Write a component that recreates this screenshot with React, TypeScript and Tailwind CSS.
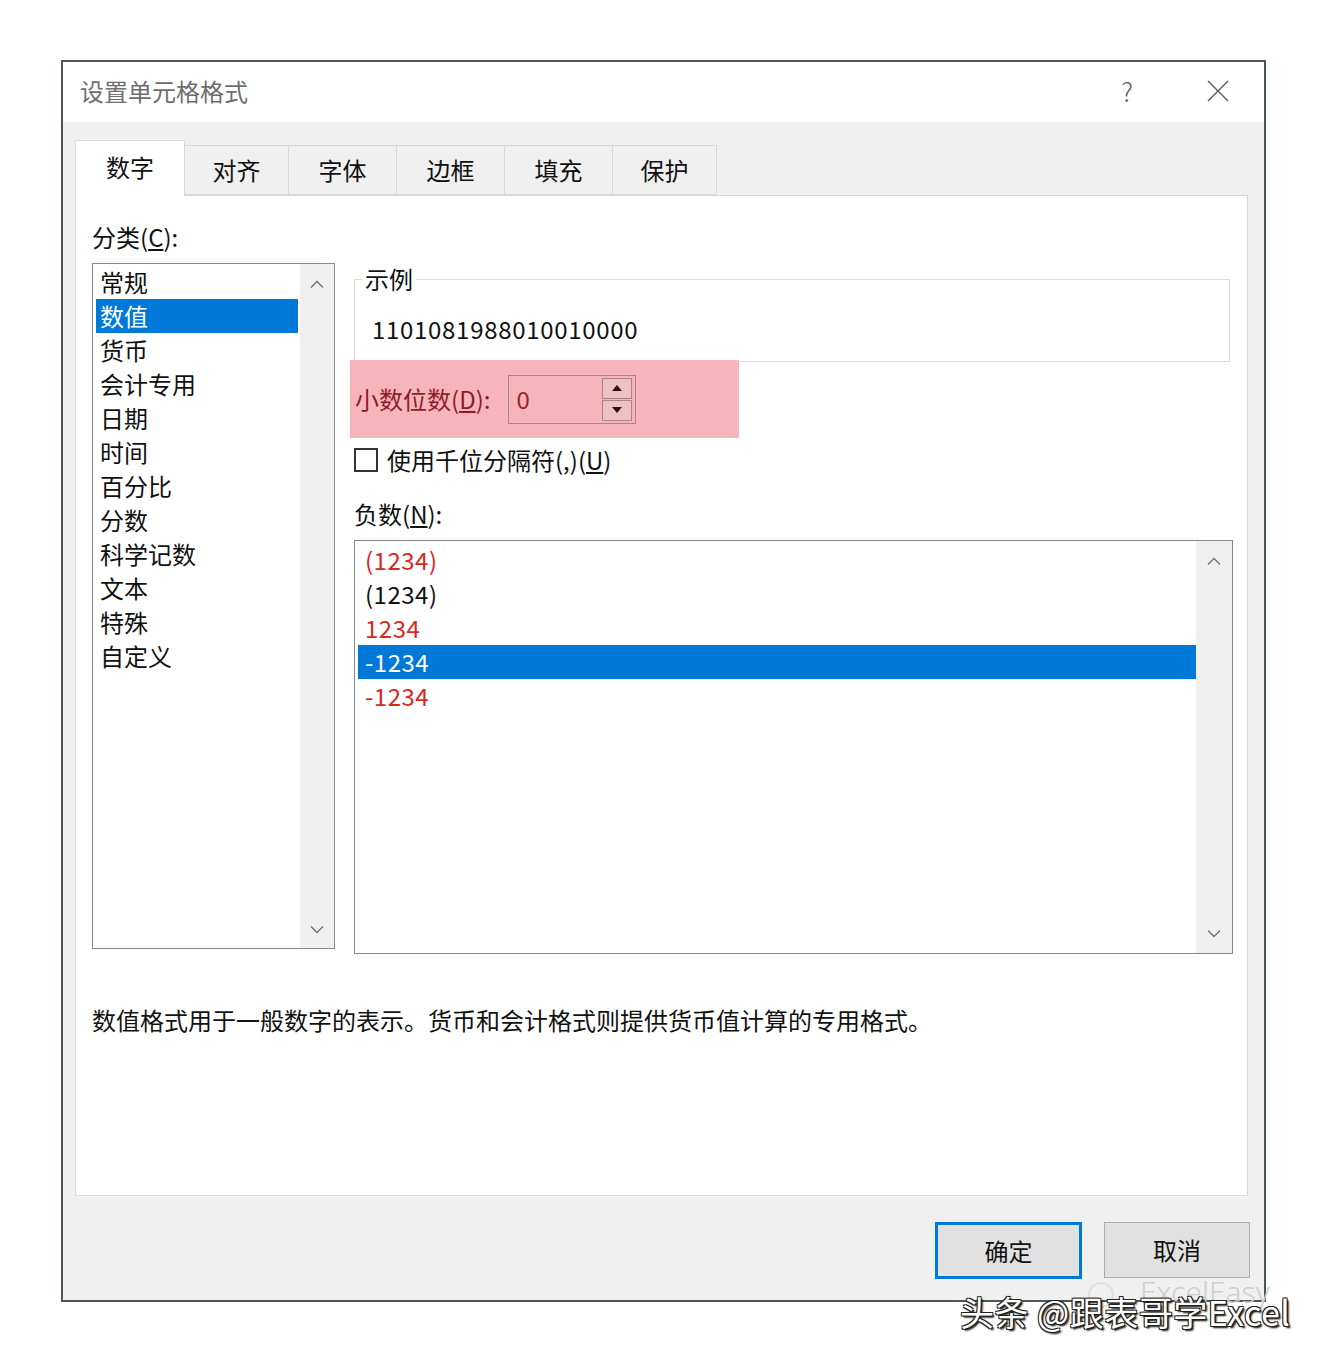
import React from "react";

const categories = ["常规", "数值", "货币", "会计专用", "日期", "时间", "百分比", "分数", "科学记数", "文本", "特殊", "自定义"];

const negatives = [
  { text: "(1234)", red: true },
  { text: "(1234)", red: false },
  { text: "1234", red: true },
  { text: "-1234", red: false, selected: true },
  { text: "-1234", red: true },
];

const tabs = ["数字", "对齐", "字体", "边框", "填充", "保护"];
const tabWidths = ["w-[110px]", "w-[104px]", "w-[108px]", "w-[108px]", "w-[108px]", "w-[104px]"];

function Chevron({ up }: { up?: boolean }) {
  return (
    <svg width="14" height="8" viewBox="0 0 14 8" fill="none" stroke="#707070" strokeWidth="1.3">
      <path d={up ? "M1 7.5L7 1.5L13 7.5" : "M1 0.5L7 6.5L13 0.5"} />
    </svg>
  );
}

function SpinArrow({ up }: { up?: boolean }) {
  return (
    <svg width="10" height="6" viewBox="0 0 10 6" fill="#2a1214">
      <path d={up ? "M0 6L5 0L10 6Z" : "M0 0L5 6L10 0Z"} />
    </svg>
  );
}

export default function App() {
  return (
    <div className="relative w-[1326px] h-[1362px] bg-white font-['Noto_Sans_CJK_SC','Noto_Sans',sans-serif] text-[24px] text-[#111]">
      <div className="absolute left-0 top-0 w-full pt-[60px] pl-[61px]">
        {/* dialog */}
        <div className="w-[1205px] h-[1242px] border-2 border-[#4b5757] flex flex-col bg-[#f0f0f0]">
          {/* title bar */}
          <div className="h-[60px] bg-white flex items-center pl-[17px] shrink-0">
            <span className="text-[#6e6e6e] leading-[30px] -mt-[3px]">设置单元格格式</span>
            <div className="flex-1" />
            <span className="text-[#5a5a5a] text-[26px] font-light leading-[30px] w-[20px] text-center mr-[70px] -mt-[3px]">?</span>
            <svg width="22" height="22" viewBox="0 0 22 22" stroke="#5a5a5a" strokeWidth="1.4" className="mr-[35px] -mt-[3px]">
              <path d="M1 1L21 21M21 1L1 21" />
            </svg>
          </div>

          {/* body */}
          <div className="flex-1 flex flex-col pl-[12px] pr-[16px] pt-[18px]">
            {/* tabs */}
            <div className="flex items-end h-[55px] relative z-10">
              {tabs.map((t, i) =>
                i === 0 ? (
                  <div
                    key={t}
                    className={`${tabWidths[i]} h-[56px] -mb-px bg-white border border-b-0 border-[#d9d9d9] rounded-t-[2px] flex items-center justify-center pb-[3px]`}
                  >
                    {t}
                  </div>
                ) : (
                  <div
                    key={t}
                    className={`${tabWidths[i]} h-[50px] bg-[#f0f0f0] border border-l-0 border-[#d9d9d9] flex items-center justify-center`}
                  >
                    {t}
                  </div>
                )
              )}
            </div>

            {/* panel */}
            <div className="h-[1001px] bg-white border border-[#d9d9d9] flex flex-col pl-[16px] pr-[13px] pt-[26px]">
              <div className="flex">
                {/* left column */}
                <div className="w-[243px] flex flex-col">
                  <div className="leading-[30px] h-[30px] mb-[11px]">
                    分类(<span className="underline underline-offset-2">C</span>):
                  </div>
                  <div className="h-[686px] border border-[#828790] bg-white flex">
                    <div className="flex-1 pt-[1px] pl-[3px] pr-[2px]">
                      {categories.map((c) => (
                        <div
                          key={c}
                          className={`h-[34px] leading-[34px] pl-[4px] ${c === "数值" ? "bg-[#0078d7] text-white" : ""}`}
                        >
                          {c}
                        </div>
                      ))}
                    </div>
                    <div className="w-[34px] bg-[#f0f0f0] flex flex-col items-center justify-between pt-[16px] pb-[14px]">
                      <Chevron up />
                      <Chevron />
                    </div>
                  </div>
                </div>

                {/* right column */}
                <div className="ml-[19px] w-[879px] flex flex-col pt-[42px]">
                  <fieldset className="w-[876px] border border-[#dcdcdc] pl-[17px] pr-0 pt-[20px] pb-[17px] m-0 min-w-0">
                    <legend className="-ml-[10px] px-[3px] leading-[30px]">示例</legend>
                    <div className="leading-[30px] tracking-[0.7px]">1101081988010010000</div>
                  </fieldset>

                  <div className="-ml-[4px] -mt-[2px] w-[389px] h-[78px] bg-[#f6b5ba] flex items-center pl-[5px] relative z-10">
                    <span className="text-[#8e1c26] leading-[30px]">
                      小数位数(<span className="underline underline-offset-2">D</span>):
                    </span>
                    <div className="ml-[18px] w-[128px] h-[49px] border border-[#a8858a] flex items-center">
                      <span className="flex-1 pl-[7px] text-[#a3202b] leading-[30px]">0</span>
                      <div className="w-[30px] h-[43px] mr-[3px] flex flex-col gap-[1px]">
                        <div className="flex-1 bg-[#efc1c5] border border-[#a8858a] flex items-center justify-center">
                          <SpinArrow up />
                        </div>
                        <div className="flex-1 bg-[#efc1c5] border border-[#a8858a] flex items-center justify-center">
                          <SpinArrow />
                        </div>
                      </div>
                    </div>
                  </div>

                  <div className="flex items-center h-[30px] mt-[7px]">
                    <div className="w-[24px] h-[24px] border-2 border-[#333] bg-white" />
                    <span className="ml-[9px] leading-[30px]">
                      使用千位分隔符(,)(<span className="underline underline-offset-2">U</span>)
                    </span>
                  </div>

                  <div className="leading-[30px] h-[30px] mt-[24px] mb-[11px]">
                    负数(<span className="underline underline-offset-2">N</span>):
                  </div>

                  <div className="h-[414px] border border-[#828790] bg-white flex">
                    <div className="flex-1 pt-[2px] pl-[3px]">
                      {negatives.map((n, i) => (
                        <div
                          key={i}
                          className={`h-[34px] leading-[34px] pl-[7px] tracking-[0.5px] ${
                            n.selected ? "bg-[#0078d7] text-white" : n.red ? "text-[#d8271f]" : ""
                          }`}
                        >
                          {n.text}
                        </div>
                      ))}
                    </div>
                    <div className="w-[36px] bg-[#f0f0f0] flex flex-col items-center justify-between pt-[16px] pb-[15px]">
                      <Chevron up />
                      <Chevron />
                    </div>
                  </div>
                </div>
              </div>

              <div className="mt-[51px] leading-[30px]">
                数值格式用于一般数字的表示。货币和会计格式则提供货币值计算的专用格式。
              </div>
            </div>

            {/* buttons */}
            <div className="flex justify-end gap-[22px] mt-[26px] -mr-[2px]">
              <div className="w-[147px] h-[57px] border-[3px] border-[#0078d7] bg-[#e1e1e1] flex items-center justify-center">
                确定
              </div>
              <div className="w-[146px] h-[56px] border border-[#adadad] bg-[#e1e1e1] flex items-center justify-center">
                取消
              </div>
            </div>
          </div>
        </div>
      </div>

      {/* watermark */}
      <div className="absolute left-[1088px] top-[1282px] w-[26px] h-[26px] rounded-full border-2 border-[#e0e0e0]" />
      <div className="absolute left-[1140px] top-[1274px] text-[30px] leading-[36px] text-[#cfcfcf] font-['Noto_Sans',sans-serif] font-light">
        ExcelEasy
      </div>
      <div className="absolute left-[960px] top-[1290px] text-[34px] leading-[44px] tracking-[0.5px] text-white font-['Noto_Sans_CJK_SC','Noto_Sans',sans-serif] [text-shadow:1px_1px_0_#222,-1px_-1px_0_#222,1px_-1px_0_#222,-1px_1px_0_#222,2px_2px_2px_#000]">
        头条 @跟表哥学Excel
      </div>
    </div>
  );
}
